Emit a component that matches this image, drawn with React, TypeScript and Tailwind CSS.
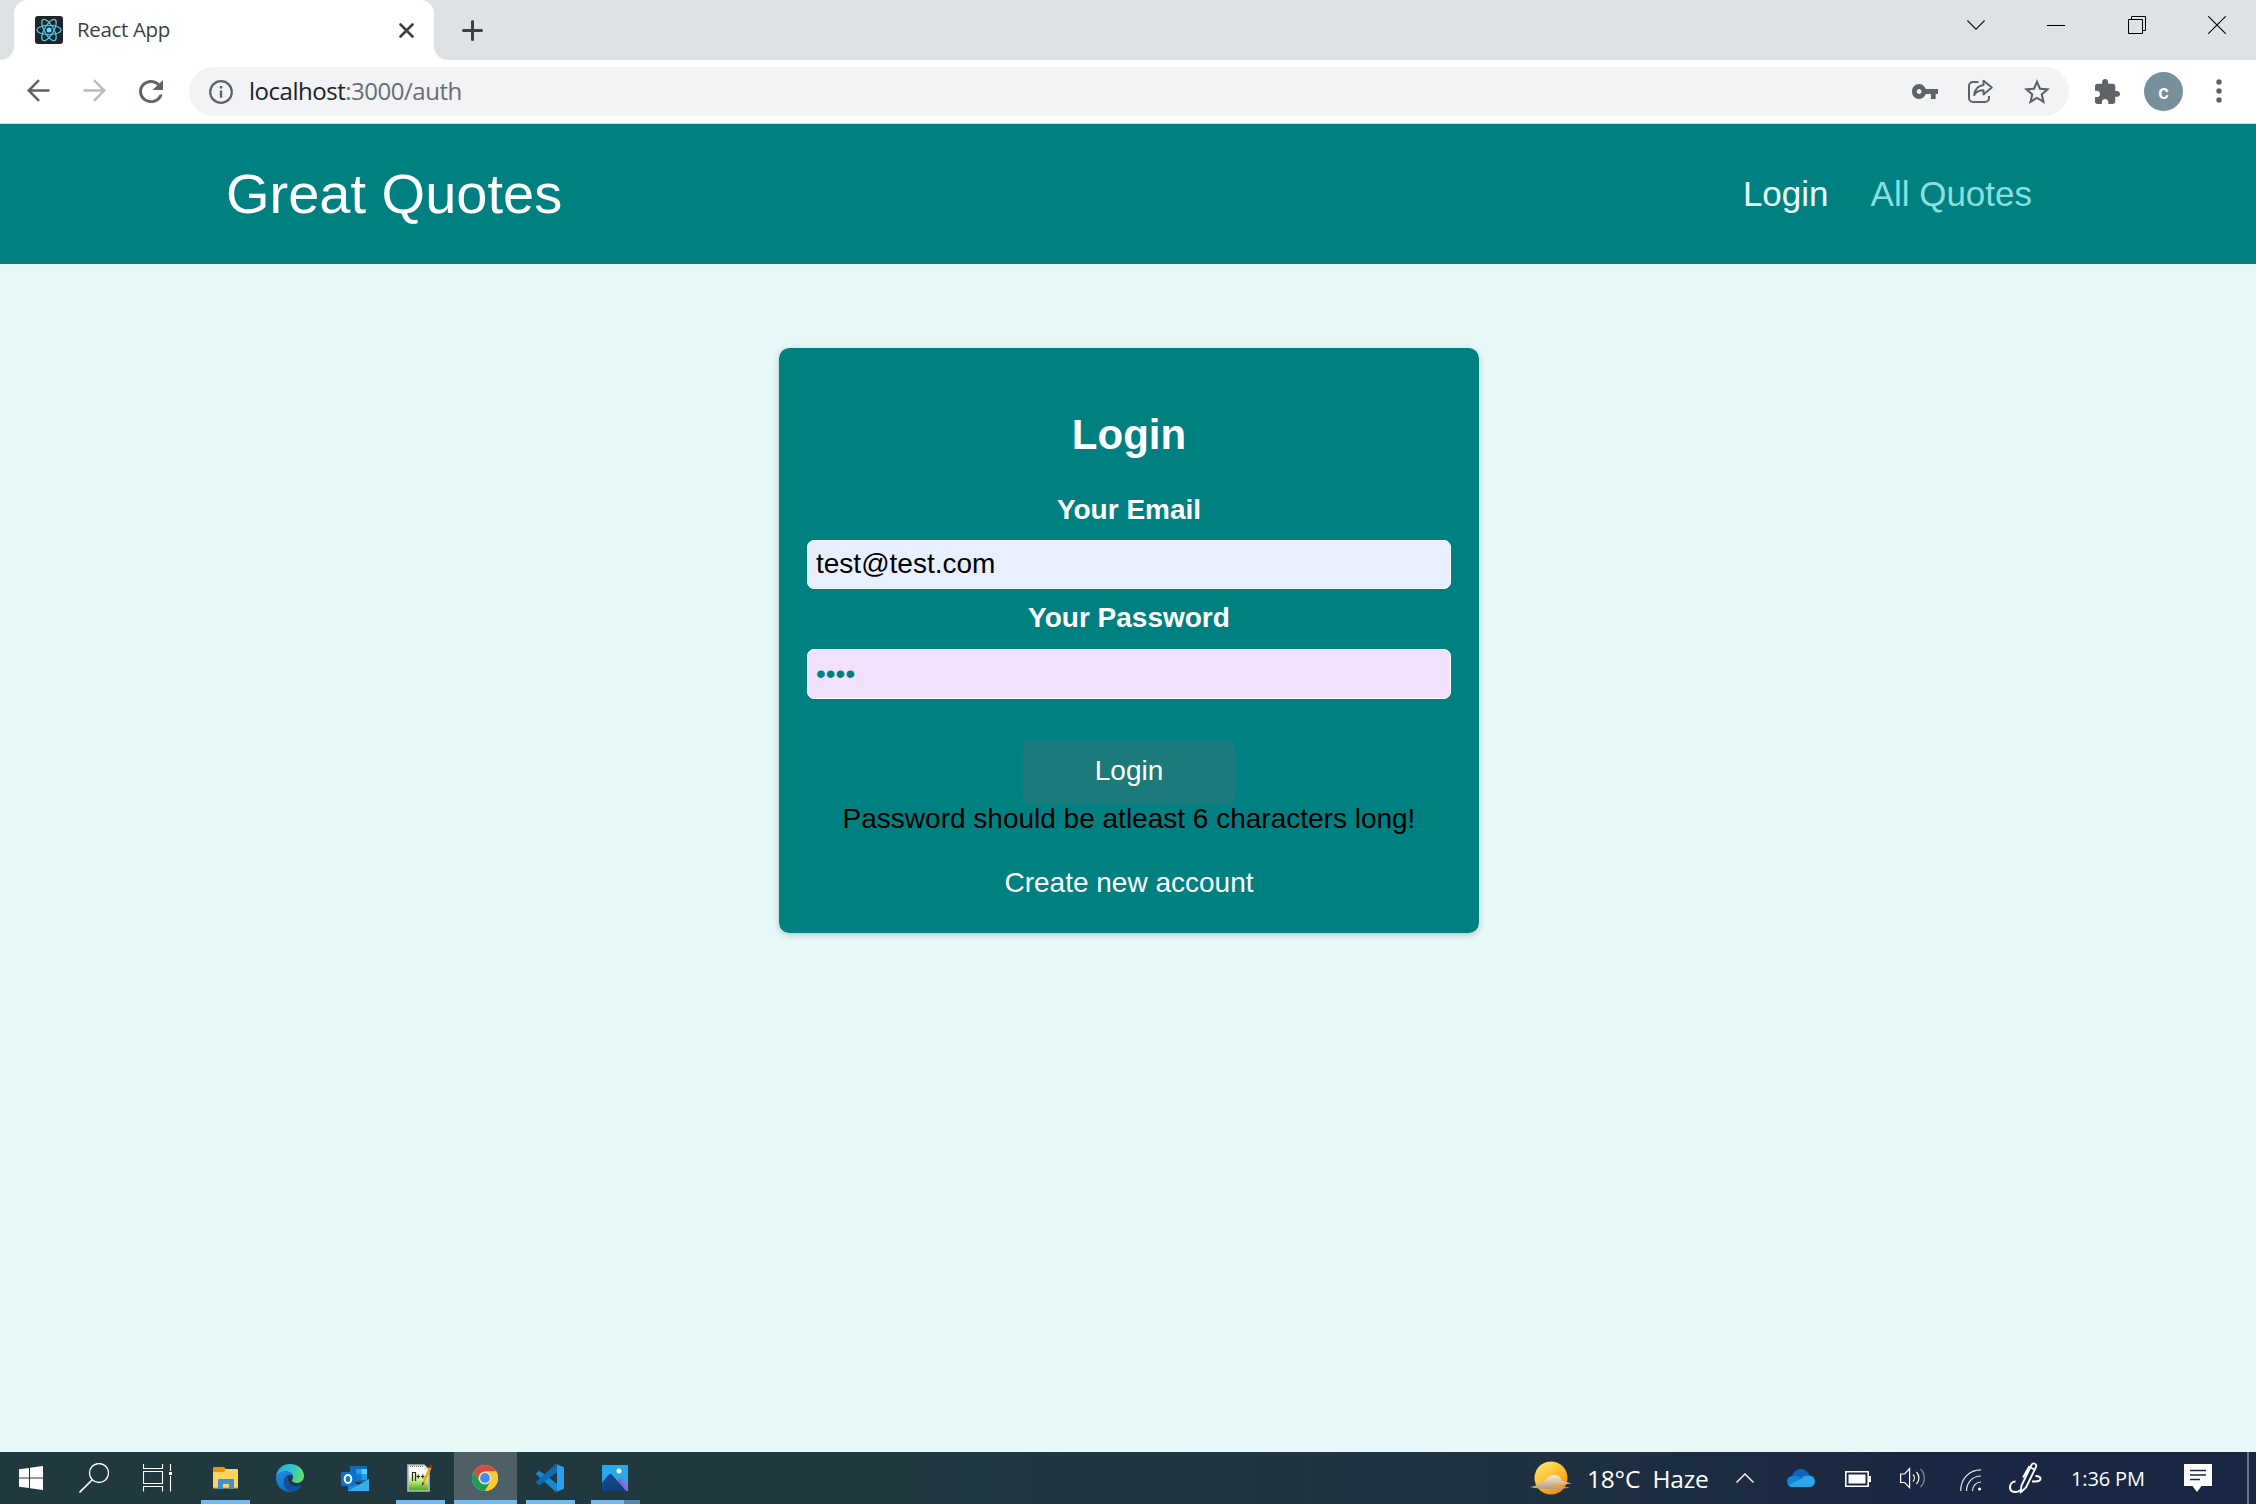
import React from "react";

type IconProps = {
  w: number;
  h: number;
  vb: string;
  className?: string;
  children: React.ReactNode;
};

function Icon({ w, h, vb, className = "", children }: IconProps) {
  return (
    <svg
      width={w}
      height={h}
      viewBox={vb}
      preserveAspectRatio="none"
      fill="none"
      className={`block shrink-0 ${className}`}
    >
      {children}
    </svg>
  );
}

function ReactLogo() {
  return (
    <Icon w={28} h={28} vb="0 0 28 28">
      <rect width="28" height="28" rx="3" fill="#20232a" />
      <g stroke="#53c1de" strokeWidth="1.3">
        <ellipse cx="14" cy="14" rx="12" ry="4.6" />
        <ellipse cx="14" cy="14" rx="12" ry="4.6" transform="rotate(60 14 14)" />
        <ellipse cx="14" cy="14" rx="12" ry="4.6" transform="rotate(120 14 14)" />
      </g>
      <circle cx="14" cy="14" r="2.5" fill="#61dafb" />
    </Icon>
  );
}

function TabStrip() {
  return (
    <div className="flex h-[60px] bg-[#dee1e6]">
      <Icon w={14} h={60} vb="0 0 14 60">
        <path d="M14 46v14H0A14 14 0 0 0 14 46z" fill="#fff" />
      </Icon>
      <div className="flex h-[60px] w-[420px] items-center rounded-t-[14px] bg-white pl-[21px]">
        <ReactLogo />
        <span className="ml-[14px] grow pb-[2px] text-[20.5px] leading-[28px] tracking-[-0.35px] text-[#3c4043]">
          React App
        </span>
        <Icon w={15} h={15} vb="0 0 15 15" className="mr-[20px]">
          <path d="M1.5 1.5l12 12M13.5 1.5l-12 12" stroke="#3c4043" strokeWidth="2.6" strokeLinecap="round" />
        </Icon>
      </div>
      <Icon w={14} h={60} vb="0 0 14 60">
        <path d="M0 46v14h14A14 14 0 0 1 0 46z" fill="#fff" />
      </Icon>
      <div className="flex grow items-center pl-[14px]">
        <Icon w={21} h={21} vb="0 0 21 21">
          <path d="M10.5 1.5v18M1.5 10.5h18" stroke="#3c4043" strokeWidth="3" strokeLinecap="round" />
        </Icon>
      </div>
      <div className="flex h-[50px] items-center gap-[62px] pr-[30px]">
        <Icon w={18} h={10} vb="0 0 18 10" className="-ml-px mr-px">
          <path d="M.4.5L9 9.2 17.6.5" stroke="#111" strokeWidth="1.1" />
        </Icon>
        <Icon w={18} h={18} vb="0 0 18 18" className="-ml-px mr-px">
          <path d="M0 9.5h18" stroke="#000" />
        </Icon>
        <Icon w={18} h={18} vb="0 0 18 18">
          <path d="M.5 3.5h14v14H.5zM3.5 3.5v-3h14v14h-3" stroke="#000" />
        </Icon>
        <Icon w={18} h={18} vb="0 0 18 18">
          <path d="M.3.3l17.4 17.4M17.7.3L.3 17.7" stroke="#000" strokeWidth="1.1" />
        </Icon>
      </div>
    </div>
  );
}

function Toolbar() {
  return (
    <div className="flex h-[64px] items-center border-b border-[#d5d8dc] bg-white pl-[27px] pr-[34px]">
      <Icon w={23} h={23} vb="0 0 23 23" className="-mt-[2px]">
        <path d="M22.5 11.5H2M12 1.2L1.7 11.5 12 21.8" stroke="#5f6368" strokeWidth="2.5" />
      </Icon>
      <Icon w={23} h={23} vb="0 0 23 23" className="-mt-[2px] ml-[33px]">
        <path d="M.5 11.5H21M11 1.2l10.3 10.3L11 21.8" stroke="#babcbe" strokeWidth="2.5" />
      </Icon>
      <Icon w={24} h={23} vb="4 4 16 16" className="-mt-px ml-[33px]">
        <path
          fill="#5f6368"
          d="M17.65 6.35C16.2 4.9 14.21 4 12 4c-4.42 0-7.99 3.58-7.99 8s3.57 8 7.99 8c3.73 0 6.84-2.55 7.73-6h-2.08c-.82 2.33-3.04 4-5.65 4-3.31 0-6-2.69-6-6s2.69-6 6-6c1.66 0 3.14.69 4.22 1.78L13 11h7V4l-2.35 2.35z"
        />
      </Icon>
      <div className="ml-[26px] flex h-[49px] grow items-center rounded-full bg-[#f1f3f4] pl-[20px] pr-[19px]">
        <Icon w={24} h={24} vb="0 0 24 24">
          <circle cx="12" cy="12" r="10.8" stroke="#5f6368" strokeWidth="2.2" />
          <path d="M12 10.5v7.3M12 6v2.6" stroke="#5f6368" strokeWidth="2.4" />
        </Icon>
        <span className="ml-[16px] grow pb-[2px] text-[24px] leading-[32px] tracking-[-0.48px] text-[#6a6d71]">
          <span className="text-[#202124]">localhost</span>:3000/auth
        </span>
        <Icon w={26} h={15} vb="1 6 22 12" className="-mt-px">
          <path
            fill="#5f6368"
            d="M12.65 10C11.83 7.67 9.61 6 7 6c-3.31 0-6 2.69-6 6s2.69 6 6 6c2.61 0 4.83-1.67 5.65-4H17v4h4v-4h2v-4H12.65zM7 14c-1.1 0-2-.9-2-2s.9-2 2-2 2 .9 2 2-.9 2-2 2z"
          />
        </Icon>
        <Icon w={26} h={24} vb="0 0 26 24" className="-mt-px ml-[30px]">
          <path
            d="M10.5 3H5a4 4 0 0 0-4 4v12a4 4 0 0 0 4 4h12a4 4 0 0 0 4-4v-2"
            stroke="#5f6368"
            strokeWidth="2"
          />
          <path
            d="M15.5 1.8l8.3 6.8-8.3 6.8v-4.1c-4.5 0-7.3 1.5-9.3 4.6.6-5 3.6-9.2 9.3-10z"
            stroke="#5f6368"
            strokeWidth="2"
            strokeLinejoin="round"
          />
        </Icon>
        <Icon w={26} h={25} vb="2 2 20 19" className="ml-[30px]">
          <path
            fill="#5f6368"
            d="M22 9.24l-7.19-.62L12 2 9.19 8.63 2 9.24l5.46 4.73L5.82 21 12 17.27 18.18 21l-1.63-7.03L22 9.24zM12 15.4l-3.76 2.27 1-4.28-3.32-2.88 4.38-.38L12 6.1l1.71 4.04 4.38.38-3.32 2.88 1 4.28L12 15.4z"
          />
        </Icon>
      </div>
      <Icon w={25} h={25} vb="2 1 21 21" className="ml-[26px]">
        <path
          fill="#5f6368"
          d="M20.5 11H19V7c0-1.1-.9-2-2-2h-4V3.5C13 2.12 11.88 1 10.5 1S8 2.12 8 3.5V5H4c-1.1 0-1.99.9-1.99 2v3.8H3.5c1.49 0 2.7 1.21 2.7 2.7s-1.21 2.7-2.7 2.7H2V20c0 1.1.9 2 2 2h3.8v-1.5c0-1.49 1.21-2.7 2.7-2.7 1.49 0 2.7 1.21 2.7 2.7V22H17c1.1 0 2-.9 2-2v-4h1.5c1.38 0 2.5-1.12 2.5-2.5S21.88 11 20.5 11z"
        />
      </Icon>
      <div className="ml-[24px] flex size-[39px] items-center justify-center rounded-full bg-[#78909c] font-['Roboto'] text-[20px] font-medium leading-none text-white">
        c
      </div>
      <Icon w={6} h={24} vb="0 0 6 24" className="-mt-px ml-[33px]">
        <circle cx="3" cy="3" r="2.7" fill="#5f6368" />
        <circle cx="3" cy="12" r="2.7" fill="#5f6368" />
        <circle cx="3" cy="21" r="2.7" fill="#5f6368" />
      </Icon>
    </div>
  );
}

function SiteHeader() {
  return (
    <header className="flex h-[140px] items-center justify-between bg-[#008080] pl-[226px] pr-[224px]">
      <div className="text-[56px] leading-[64px] text-white">Great Quotes</div>
      <nav className="flex gap-[42px] text-[35px] leading-[40px]">
        <span className="text-[#e6fcfc]">Login</span>
        <span className="text-[#88dfdf]">All Quotes</span>
      </nav>
    </header>
  );
}

function LoginCard() {
  return (
    <section className="ml-[779px] mt-[84px] flex h-[585px] w-[700px] flex-col items-center rounded-[10.5px] bg-[#008080] px-[28px] pt-[63px] text-[28px] leading-[32px] text-white shadow-[0_2px_7px_rgba(0,0,0,0.2)]">
      <h1 className="text-[42px] font-bold leading-[48px]">Login</h1>
      <label className="mt-[35px] font-bold">Your Email</label>
      <div className="mt-[14px] flex h-[49px] w-full items-center rounded-[7px] border border-white bg-[#e8f0fe] px-[8px] pb-px text-black">
        test@test.com
      </div>
      <label className="mt-[13px] font-bold">Your Password</label>
      <div className="mt-[15px] flex h-[50px] w-full items-center rounded-[7px] border border-white bg-[#f1e1fc] px-[8px] pb-px text-[#008080]">
        ••••
      </div>
      <div className="mt-[42px] flex h-[63px] w-[212px] shrink-0 items-center justify-center rounded-[7px] bg-[#1c7a7a] pb-[3px]">
        Login
      </div>
      <p className="-mt-px text-black">Password should be atleast 6 characters long!</p>
      <p className="mt-[32px]">Create new account</p>
    </section>
  );
}

function AppCell({ underline = false, active = false, children }: { underline?: boolean; active?: boolean; children: React.ReactNode }) {
  return (
    <div className={`flex h-[52px] w-[65px] flex-col items-center ${active ? "px-px" : "px-[8px]"}`}>
      <div className={`flex w-full grow items-center justify-center pt-[4px] ${active ? "bg-[#4e5f66]" : ""}`}>
        {children}
      </div>
      <div className={`h-[4px] w-full ${underline ? "bg-[#76b9ed]" : ""}`} />
    </div>
  );
}

function WindowsLogo() {
  return (
    <Icon w={24} h={24} vb="0 0 24 24">
      <path fill="#fff" d="M0 3.3L10 2v9.500H0zM11 1.800L24 0v11.500H11zM0 12.500h10V22L0 20.700zM11 12.500h13V24l-13-1.800z" />
    </Icon>
  );
}

function FolderIcon() {
  return (
    <Icon w={25} h={22} vb="0 0 25 22">
      <path d="M0 1a1 1 0 0 1 1-1h10l2 2v4H0z" fill="#e09b06" />
      <path d="M0 5h11l2-3h11a1 1 0 0 1 1 1v18H0z" fill="#ffd45e" />
      <path d="M5 22v-9a1 1 0 0 1 1-1h14a1 1 0 0 1 1 1v9h-5v-5H10v5z" fill="#3f92d2" />
      <path d="M0 20h5v1.500H0zM10 20h6v1.500h-6zM21 20h4v1.500h-4z" fill="#f2b632" />
    </Icon>
  );
}

function EdgeIcon() {
  return (
    <Icon w={28} h={28} vb="0 0 28 28">
      <defs>
        <linearGradient id="edgeTop" x1="0" y1="8" x2="28" y2="14" gradientUnits="userSpaceOnUse">
          <stop stopColor="#2aa9e6" />
          <stop offset=".5" stopColor="#2fc3d0" />
          <stop offset="1" stopColor="#6be05a" />
        </linearGradient>
        <linearGradient id="edgeSide" x1="0" y1="10" x2="14" y2="28" gradientUnits="userSpaceOnUse">
          <stop stopColor="#1b8fe0" />
          <stop offset="1" stopColor="#0d66bf" />
        </linearGradient>
      </defs>
      <path d="M0 14C0 6 6 0 14 0s14 5.500 14 12c0 4.500-3.500 7-7 7-3 0-5-1-5-2.500 0-1 1-1.500 1-3.500 0-3-3-5.500-7-5.500C5 7.500 1 10 0 14z" fill="url(#edgeTop)" />
      <path d="M0 14c1-4 5-6.500 9.500-6.500 3.500 0 6 1.500 7 3.500C11 10 8 14 8 18c0 5 3.500 9 8 9.800C7 29 0 22.500 0 14z" fill="url(#edgeSide)" />
      <path d="M12.500 11.500C9 13 8 16 8 18c0 5 3.500 9 8 9.800 4.500-.4 8-3 9.800-6.300.2-.5-.2-.8-.6-.5-6 3-13.200-.5-13.200-6 0-1.500.3-2.700.5-3.500z" fill="#12529a" />
    </Icon>
  );
}

function OutlookIcon() {
  return (
    <Icon w={28} h={25} vb="0 0 28 25">
      <path d="M9 1a1 1 0 0 1 1-1h16v16H9z" fill="#0f6cbd" />
      <path d="M15 3h5.500v5.500H15z" fill="#1e9be9" />
      <path d="M20.500 3H26v5.500h-5.500z" fill="#4fd3fa" />
      <path d="M15 8.500h5.500V14H15z" fill="#1176cd" />
      <path d="M20.500 8.500H26V14h-5.500z" fill="#1e9be9" />
      <path d="M7 13l10.500 6L28 13v12H7z" fill="#1a86d9" />
      <path d="M28 13v12H7z" fill="#38aeee" />
      <rect y="6" width="14" height="14" rx="1.200" fill="#0a72cf" />
      <ellipse cx="7" cy="13" rx="3.300" ry="3.900" stroke="#fff" strokeWidth="2" />
    </Icon>
  );
}

function NotepadIcon() {
  return (
    <Icon w={26} h={28} vb="0 0 26 28">
      <defs>
        <linearGradient id="npp" x1="0" y1="0" x2="0" y2="28" gradientUnits="userSpaceOnUse">
          <stop offset=".35" stopColor="#fbfdf6" />
          <stop offset=".6" stopColor="#c8ea82" />
          <stop offset=".95" stopColor="#3fae12" />
        </linearGradient>
      </defs>
      <path d="M1 1h16l5 5v21H1z" fill="url(#npp)" stroke="#b8bab8" strokeWidth="1.600" />
      <path d="M17 1v5h5z" fill="#e4e4e4" />
      <path d="M3 2.500h13" stroke="#777" strokeDasharray="1 1" />
      <path d="M5.500 17V8.500h3V17M9.500 12.500h3.500M11.200 10.500v4M14 12.500h3.500M15.800 10.500v4" stroke="#27301f" strokeWidth="1.200" />
      <path d="M14.500 22.500l1-4.500L22 3l2.500 1.300-7 15z" fill="#f0a51e" />
      <path d="M22 3l1.200-2.500L26 1.800 24.500 4.300z" fill="#a3222c" />
      <path d="M14.500 22.500l1-4.500 2 1.300z" fill="#5a4021" />
    </Icon>
  );
}

function ChromeIcon() {
  return (
    <Icon w={26} h={26} vb="0 0 26 26">
      <circle cx="13" cy="13" r="13" fill="#fcc934" />
      <path d="M13 0a13 13 0 0 1 11.260 6.500H13a6.500 6.500 0 0 0-5.630 9.750L1.740 6.500A13 13 0 0 1 13 0z" fill="#db4a3c" />
      <path d="M1.740 6.500l5.630 9.750A6.500 6.500 0 0 0 18.600 16.250L13 26A13 13 0 0 1 1.740 6.500z" fill="#1a9f5a" />
      <path d="M13 26l5.630-9.750A6.500 6.500 0 0 0 18.600 9.800L13 6.500h11.260A13 13 0 0 1 13 26z" fill="#fcc934" />
      <circle cx="13" cy="13" r="6.100" fill="#e9eefb" />
      <circle cx="13" cy="13" r="4.900" fill="#4a8af4" />
    </Icon>
  );
}

function CodeIcon() {
  return (
    <Icon w={28} h={28} vb="0 0 28 28">
      <path d="M2.500 7.200L.4 9.100c-.4.4-.4.9 0 1.300L20 28l2-7.500L4 7.200c-.5-.4-1-.4-1.500 0z" fill="#1789d3" />
      <path d="M2.500 20.800L.4 18.900c-.4-.4-.4-.9 0-1.300L20 0l2 7.500L4 20.800c-.5.4-1 .4-1.500 0z" fill="#0c6db3" />
      <path d="M20.500.2L28 3.300v21.400l-7.500 3.100c-.6.2-1 0-1.300-.4.6.4 1.800 0 1.800-1V1.600c0-1-1.200-1.400-1.800-1 .3-.4.7-.6 1.300-.4z" fill="#2c9df0" />
    </Icon>
  );
}

function PhotosIcon() {
  return (
    <Icon w={26} h={26} vb="0 0 26 26">
      <defs>
        <linearGradient id="peak" x1="8" y1="8" x2="18" y2="26" gradientUnits="userSpaceOnUse">
          <stop stopColor="#174a93" />
          <stop offset="1" stopColor="#143a78" />
        </linearGradient>
        <linearGradient id="ridge" x1="15" y1="20" x2="26" y2="14" gradientUnits="userSpaceOnUse">
          <stop stopColor="#3f63c8" />
          <stop offset="1" stopColor="#9a8be0" />
        </linearGradient>
      </defs>
      <rect width="26" height="26" rx="1" fill="#27a9ea" />
      <path d="M14 18l4.500-5c.8-.9 1.700-.9 2.500 0l5 5.500V26H14z" fill="url(#ridge)" />
      <path d="M0 17.500L7 9.500c.8-.9 2-.9 2.800 0L24 26H0z" fill="url(#peak)" />
      <circle cx="17" cy="6" r="2.500" fill="#fff" />
    </Icon>
  );
}

function WeatherIcon() {
  return (
    <Icon w={42} h={34} vb="0 0 42 34">
      <defs>
        <linearGradient id="sun" x1="10" y1="2" x2="30" y2="32" gradientUnits="userSpaceOnUse">
          <stop stopColor="#ffe36b" />
          <stop offset=".55" stopColor="#fdb92b" />
          <stop offset="1" stopColor="#f58a07" />
        </linearGradient>
        <linearGradient id="haze" x1="0" y1="14" x2="0" y2="28" gradientUnits="userSpaceOnUse">
          <stop stopColor="#fbeed2" />
          <stop offset="1" stopColor="#b39a7e" />
        </linearGradient>
      </defs>
      <circle cx="21" cy="17" r="16.500" fill="url(#sun)" />
      <path d="M10 22c3-.5 4-1 6-3.500 2-3 5-5 9-4.500s6 3 7 5.500l3 1.500 7 1.300c-8 1.800-24 1.800-32-.3z" fill="url(#haze)" />
      <path d="M0 26c4-.5 6-1 8-3 3-2.500 7-3.500 10-2 2 1 4 3.500 6 4.200l16 1.300c-10 2.200-30 2.200-40-.5z" fill="url(#haze)" />
    </Icon>
  );
}

function Taskbar() {
  return (
    <footer className="flex h-[52px] bg-linear-to-r from-[#22383f] from-40% via-[#1f3040] via-70% to-[#1a2742] to-85%">
      <div className="flex h-[52px] w-[192.5px] shrink-0 items-center pl-[19px]">
        <WindowsLogo />
        <Icon w={30} h={30} vb="0 0 30 30" className="ml-[36px]">
          <circle cx="20" cy="10" r="9.500" stroke="#fff" strokeWidth="1.300" />
          <path d="M13.300 16.700L.5 29.500" stroke="#fff" strokeWidth="1.600" />
        </Icon>
        <Icon w={29} h={28} vb="0 0 29 28" className="ml-[34px]">
          <path
            d="M.5 0v4.500h19V0M.5 7.500h19v12H.5zM.5 27.500v-5h19v5M27.500 0v7M27.500 12v15.500"
            stroke="#fff"
            strokeWidth="1.100"
          />
          <path d="M26 8h3v3h-3z" fill="#fff" />
        </Icon>
      </div>
      <AppCell underline>
        <FolderIcon />
      </AppCell>
      <AppCell>
        <EdgeIcon />
      </AppCell>
      <AppCell>
        <OutlookIcon />
      </AppCell>
      <AppCell underline>
        <NotepadIcon />
      </AppCell>
      <AppCell underline active>
        <ChromeIcon />
      </AppCell>
      <AppCell underline>
        <CodeIcon />
      </AppCell>
      <div className="flex h-[52px] w-[65px] flex-col pl-[8px]">
        <div className="flex w-[49px] grow items-center justify-center pt-[4px]">
          <PhotosIcon />
        </div>
        <div className="flex h-[4px] w-[49px]">
          <div className="w-[33px] bg-[#76b9ed]" />
          <div className="grow bg-[#5385ab]" />
        </div>
      </div>
      <div className="flex grow items-center justify-end text-white">
        <WeatherIcon />
        <span className="ml-[15px] w-[149px] whitespace-pre pt-px text-[24.5px] leading-[32px] tracking-[-0.2px]">
          18°C  Haze
        </span>
        <Icon w={18} h={10} vb="0 0 18 10">
          <path d="M.5 9.500L9 1l8.500 8.500" stroke="#fff" strokeWidth="1.400" />
        </Icon>
        <Icon w={28} h={18} vb="0 0 28 18" className="ml-[33px]">
          <path d="M5 9c0-5 4-9 9-9 4 0 7 2.500 8.300 6L14 12z" fill="#0f64ba" />
          <path d="M5.500 18A5.500 5.500 0 0 1 0 12.500C0 9 3 6.500 6.500 7c3-.5 5 .5 7 2l5 4-6 5z" fill="#1583d6" />
          <path d="M14 10c2-3 5-4 8.500-3.500C26 7 28 9.500 28 12.500c0 3-2.500 5.500-5.500 5.500H5.500c-2 0-3-.7-4-2z" fill="#2aa6ea" />
        </Icon>
        <Icon w={26} h={16} vb="0 0 26 16" className="ml-[30px] mt-[2px]">
          <path d="M.8.8h22.400v14.400H.8z" stroke="#fff" strokeWidth="1.600" />
          <path d="M3.500 3.500h17v9h-17zM24 5h2v6h-2z" fill="#fff" />
        </Icon>
        <Icon w={26} h={22} vb="0 0 26 22" className="ml-[29px]">
          <path d="M.6 7h4l5-5.500v19L4.600 15.500h-4z" stroke="#fff" strokeWidth="1.200" />
          <path d="M13 7.500c1.800 2 1.800 5 0 7M16.500 5c3.200 3.500 3.200 8.500 0 12" stroke="#fff" strokeWidth="1.200" />
          <path d="M20.500 2c5 5 5 13 0 18" stroke="#7d889b" strokeWidth="1.300" />
        </Icon>
        <Icon w={22} h={22} vb="0 0 22 22" className="ml-[34px] mt-[4px]">
          <path d="M.7 22C.7 10 9 .8 21 .8M6.500 22C6.500 13.500 12.500 7 21 7M12.500 22c0-5 3.500-9 8.500-9" stroke="#e6e9ee" strokeWidth="1.200" />
          <circle cx="19.500" cy="20" r="1.500" fill="#fff" />
        </Icon>
        <Icon w={33} h={32} vb="0 0 33 32" className="ml-[27px]">
          <path
            d="M6.500 19.500C3 19.500 1 22.500 1 25.500S3.500 30 7 30c2 0 3-.5 4-2M26.500 14c2.500 0 5 .8 5 2.800S29 19.500 26 19.500h-3"
            stroke="#fff"
            strokeWidth="2"
          />
          <path d="M11.500 30.500l1-7L22.500 3c1.500-3 6-1 4.500 2L17 25.500zM21.500 5.500l4.500 2.300M20.500 4L14 15.500" stroke="#fff" strokeWidth="1.800" strokeLinejoin="round" />
        </Icon>
        <span className="ml-[29px] w-[113px] whitespace-nowrap pt-px text-[20px] leading-[28px] tracking-[-0.15px]">
          1:36 PM
        </span>
        <Icon w={28} h={28} vb="0 0 28 28">
          <path d="M0 0h28v22H17.500L13 28l-4.500-6H0z" fill="#fff" />
          <path d="M6 6.500h16M6 11h16M6 15.500h10" stroke="#1a2742" strokeWidth="1.400" />
        </Icon>
        <div className="ml-[35px] mr-[7px] h-[52px] w-[2px] bg-[#6c768a]" />
      </div>
    </footer>
  );
}

export default function App() {
  return (
    <div className="flex h-[1504px] w-[2256px] flex-col overflow-hidden bg-[#e6f8f8] font-['Open_Sans','Noto_Sans',sans-serif]">
      <TabStrip />
      <Toolbar />
      <main className="grow font-['Liberation_Sans',Arial,sans-serif]">
        <SiteHeader />
        <LoginCard />
      </main>
      <Taskbar />
    </div>
  );
}
